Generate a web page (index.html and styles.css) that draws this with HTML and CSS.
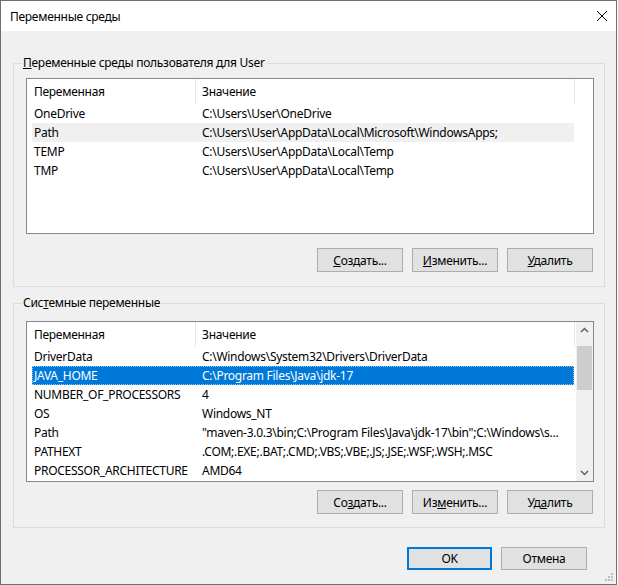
FILE: index.html
```html
<!DOCTYPE html>
<html lang="ru">
  <head>
    <meta charset="UTF-8" />
    <title>Переменные среды</title>
    <link rel="stylesheet" href="styles.css">
  </head>
  <body>
    <div class="window">
      <div class="titlebar">
        <span class="title">Переменные среды</span>
        <svg class="close" width="12" height="12" viewBox="0 0 12 12">
          <path d="M1 1 L11 11 M11 1 L1 11" stroke="#000" stroke-width="1" fill="none" />
        </svg>
      </div>

      <div class="body">
        <fieldset class="group group-user">
          <legend><u>П</u>еременные среды пользователя для User</legend>
          <div class="list list-user">
            <div class="list-content">
              <div class="row head">
                <span class="col-name">Переменная</span>
                <span class="col-value">Значение</span>
              </div>
              <div class="row"><span class="col-name">OneDrive</span><span class="col-value">C:\Users\User\OneDrive</span></div>
              <div class="row hover"><span class="col-name">Path</span><span class="col-value">C:\Users\User\AppData\Local\Microsoft\WindowsApps;</span></div>
              <div class="row"><span class="col-name">TEMP</span><span class="col-value">C:\Users\User\AppData\Local\Temp</span></div>
              <div class="row"><span class="col-name">TMP</span><span class="col-value">C:\Users\User\AppData\Local\Temp</span></div>
            </div>
          </div>
          <div class="buttons">
            <button><u>С</u>оздать...</button>
            <button><u>И</u>зменить...</button>
            <button><u>У</u>далить</button>
          </div>
        </fieldset>

        <fieldset class="group group-system">
          <legend>Сис<u>т</u>емные переменные</legend>
          <div class="list list-system">
            <div class="list-content">
              <div class="row head">
                <span class="col-name">Переменная</span>
                <span class="col-value">Значение</span>
              </div>
              <div class="row"><span class="col-name">DriverData</span><span class="col-value">C:\Windows\System32\Drivers\DriverData</span></div>
              <div class="row selected"><span class="col-name">JAVA_HOME</span><span class="col-value">C:\Program Files\Java\jdk-17</span></div>
              <div class="row"><span class="col-name">NUMBER_OF_PROCESSORS</span><span class="col-value">4</span></div>
              <div class="row"><span class="col-name">OS</span><span class="col-value">Windows_NT</span></div>
              <div class="row"><span class="col-name">Path</span><span class="col-value">"maven-3.0.3\bin;C:\Program Files\Java\jdk-17\bin";C:\Windows\s...</span></div>
              <div class="row"><span class="col-name">PATHEXT</span><span class="col-value">.COM;.EXE;.BAT;.CMD;.VBS;.VBE;.JS;.JSE;.WSF;.WSH;.MSC</span></div>
              <div class="row"><span class="col-name">PROCESSOR_ARCHITECTURE</span><span class="col-value">AMD64</span></div>
            </div>
            <div class="scrollbar">
              <svg class="arrow" width="17" height="17" viewBox="0 0 17 17">
                <path d="M5 10 L8.5 6.5 L12 10" stroke="#606060" stroke-width="1.5" fill="none" />
              </svg>
              <div class="track">
                <div class="thumb"></div>
              </div>
              <svg class="arrow" width="17" height="17" viewBox="0 0 17 17">
                <path d="M5 7 L8.5 10.5 L12 7" stroke="#606060" stroke-width="1.5" fill="none" />
              </svg>
            </div>
          </div>
          <div class="buttons">
            <button>Со<u>з</u>дать...</button>
            <button>Из<u>м</u>енить...</button>
            <button>Уд<u>а</u>лить</button>
          </div>
        </fieldset>

        <div class="dialog-buttons">
          <button class="default">OK</button>
          <button>Отмена</button>
        </div>
      </div>

      <svg class="grip" width="10" height="10" viewBox="0 0 10 10">
        <rect x="7" y="1" width="2" height="2" fill="#bcbcbc" />
        <rect x="4" y="4" width="2" height="2" fill="#bcbcbc" />
        <rect x="7" y="4" width="2" height="2" fill="#bcbcbc" />
        <rect x="1" y="7" width="2" height="2" fill="#bcbcbc" />
        <rect x="4" y="7" width="2" height="2" fill="#bcbcbc" />
        <rect x="7" y="7" width="2" height="2" fill="#bcbcbc" />
      </svg>
    </div>
  </body>
</html>
```

FILE: styles.css
```css
body {
  margin: 0;
  font-family: "Noto Sans", "Open Sans", sans-serif;
  font-size: 12px;
  letter-spacing: -0.28px;
  color: #000;
}

.window {
  position: relative;
  width: 617px;
  height: 585px;
  box-sizing: border-box;
  border: 1px solid #707070;
  background-color: #f0f0f0;
}

.titlebar {
  height: 30px;
  background-color: #fff;
  display: flex;
  align-items: center;
  justify-content: space-between;
  padding: 0 8px 0 9px;
}

.body {
  padding: 0 0 0 12px;
}

/* group boxes */
.group {
  width: 592px;
  box-sizing: border-box;
  margin: 0;
  border: 1px solid #dcdcdc;
  padding: 0 0 0 12px;
}

.group legend {
  line-height: 16px;
  padding: 0 2px 0 1px;
  margin-left: -4px;
}

.group-user {
  margin-top: 24px;
  padding-top: 7px;
  padding-bottom: 14px;
}

.group-system {
  margin-top: 8px;
  padding-top: 10px;
  padding-bottom: 13px;
}

/* list views */
.list {
  width: 568px;
  box-sizing: border-box;
  border: 1px solid #828790;
  background-color: #fff;
  display: flex;
  overflow: hidden;
}

.list-user {
  height: 156px;
}

.list-system {
  height: 161px;
}

.list-content {
  flex: 1;
  padding-left: 5px;
}

.row {
  width: 542px;
  height: 19px;
  line-height: 19px;
  display: flex;
  white-space: nowrap;
  overflow: hidden;
}

.row.head {
  width: 543px;
  height: 25px;
  line-height: 25px;
}

.col-name {
  width: 164px;
  box-sizing: border-box;
  padding-left: 2px;
  flex-shrink: 0;
}

.col-value {
  flex: 1;
  padding-left: 6px;
  overflow: hidden;
}

.head .col-name,
.head .col-value {
  border-right: 1px solid #e5e5e5;
}

.row.hover {
  background-color: #f0f0f0;
}

.row.selected {
  background-color: #0078d7;
  color: #fff;
  outline: 1px dotted #8cc4f0;
  outline-offset: -1px;
}

/* scrollbar */
.scrollbar {
  width: 17px;
  background-color: #f0f0f0;
  display: flex;
  flex-direction: column;
}

.track {
  flex: 1;
  padding: 7px 1px 0 1px;
}

.thumb {
  height: 44px;
  background-color: #cdcdcd;
}

/* buttons */
button {
  font-family: "Noto Sans", "Open Sans", sans-serif;
  font-size: 12px;
  letter-spacing: -0.28px;
  color: #000;
  background-color: #e1e1e1;
  border: 1px solid #adadad;
  padding: 0;
  margin: 0;
}

.buttons {
  display: flex;
  justify-content: flex-end;
  gap: 9px;
  width: 567px;
}

.group-user .buttons {
  margin-top: 14px;
}

.group-system .buttons {
  margin-top: 8px;
}

.buttons button {
  width: 86px;
  height: 24px;
}

.dialog-buttons {
  display: flex;
  justify-content: flex-end;
  gap: 9px;
  margin-top: 19px;
  padding-right: 29px;
}

.dialog-buttons button {
  width: 86px;
  height: 23px;
}

.dialog-buttons button.default {
  width: 85px;
  border: 2px solid #0078d7;
}

.grip {
  position: absolute;
  right: 2px;
  bottom: 2px;
}
```
